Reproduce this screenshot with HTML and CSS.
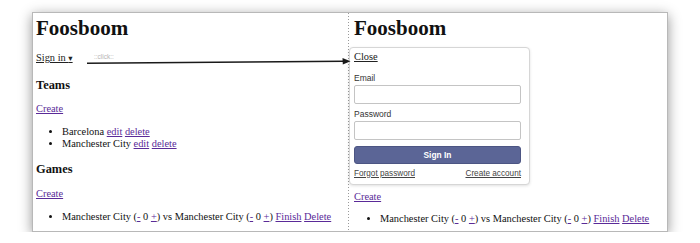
FILE: index.html
```html
<!DOCTYPE html>
<html>
  <head>
    <meta charset="UTF-8" />
    <title>Foosboom</title>
    <link rel="stylesheet" href="styles.css">
  </head>
  <body>
    <div class="shot">
      <div class="page page-left">
        <h1>Foosboom</h1>
        <p class="signin"><a href="#" class="plain">Sign in <span class="caret">&#9662;</span></a></p>
        <h3>Teams</h3>
        <p class="gap"><a href="#">Create</a></p>
        <ul class="gap">
          <li>Barcelona <a href="#">edit</a> <a href="#">delete</a></li>
          <li>Manchester City <a href="#">edit</a> <a href="#">delete</a></li>
        </ul>
        <h3 class="games">Games</h3>
        <p class="gap2"><a href="#">Create</a></p>
        <ul class="gap">
          <li>Manchester City (<a href="#">-</a> 0 <a href="#">+</a>) vs Manchester City (<a href="#">-</a> 0 <a href="#">+</a>) <a href="#">Finish</a> <a href="#">Delete</a></li>
        </ul>
      </div>

      <div class="divider"></div>

      <div class="page page-right">
        <h1>Foosboom</h1>
        <div class="dropdown">
          <a href="#" class="plain close">Close</a>
          <label class="lbl lbl-email">Email</label>
          <input class="field field-email" type="text" />
          <label class="lbl lbl-pass">Password</label>
          <input class="field field-pass" type="password" />
          <button class="btn-signin">Sign In</button>
          <div class="dd-links">
            <a href="#">Forgot password</a>
            <a href="#">Create account</a>
          </div>
        </div>
        <p class="after-dd"><a href="#">Create</a></p>
        <ul class="last">
          <li>Manchester City (<a href="#">-</a> 0 <a href="#">+</a>) vs Manchester City (<a href="#">-</a> 0 <a href="#">+</a>) <a href="#">Finish</a> <a href="#">Delete</a></li>
        </ul>
      </div>

      <!-- arrow drawn over the two screenshots -->
      <svg class="arrow" width="320" height="60" viewBox="0 0 320 60">
        <text x="61" y="45.5" class="click-note">::click::</text>
        <path d="M54 50.2 L311 48.3" stroke="#1a1a1a" stroke-width="1.6" fill="none" />
        <path d="M317.5 48.2 L309.5 45 L309.8 51.4 Z" fill="#1a1a1a" />
      </svg>
    </div>
  </body>
</html>
```

FILE: styles.css
```css
body {
  margin: 0;
  background: #fff;
  font-family: "Liberation Serif", "Times New Roman", serif;
  font-size: 10.4px;
  line-height: 12px;
  color: #111;
}

.shot {
  position: relative;
  display: flex;
  margin: 12px 0 0 32px;
  width: 636px;
  height: 220px;
  box-sizing: border-box;
  border: 1px solid #b8b8b8;
  background: #fff;
  box-shadow: 0 3px 12px rgba(0, 0, 0, 0.42);
  overflow: hidden;
}

.page {
  padding-top: 3.4px;
}

.page-left {
  width: 315px;
  padding-left: 3px;
  box-sizing: border-box;
}

.page-right {
  flex: 1;
  padding-left: 5px;
}

.divider {
  width: 1px;
  background-image: linear-gradient(#9a9a9a 40%, transparent 40%);
  background-size: 1px 3px;
}

h1 {
  margin: 0;
  font-size: 21px;
  line-height: 24px;
  font-weight: bold;
}

h3 {
  margin: 14px 0 0;
  font-size: 12.4px;
  line-height: 14px;
  font-weight: bold;
}

h3.games {
  margin-top: 12px;
}

p {
  margin: 0;
}

.signin {
  margin-top: 12px;
}

.gap {
  margin-top: 11px;
}

.gap2 {
  margin-top: 11.5px;
}

ul {
  margin: 0;
  padding-left: 26px;
}

a {
  color: #5a2a98;
}

a.plain {
  color: #222;
}

.caret {
  font-family: "DejaVu Sans", sans-serif;
  font-size: 8.5px;
  line-height: 6px;
}

/* sign in dropdown */
.dropdown {
  margin: 6.6px 0 0 -5px;
  width: 167px;
  padding: 3.4px 8px 5.5px 4px;
  border: 1px solid #d6d6d6;
  border-radius: 4px;
  background: #fff;
  box-shadow: 0 1px 3px rgba(0, 0, 0, 0.12);
}

.close {
  display: block;
  color: #333;
}

.lbl {
  display: block;
  font-family: "Liberation Sans", Arial, sans-serif;
  font-size: 8.5px;
  line-height: 10px;
  color: #333;
}

.lbl-email {
  margin-top: 10px;
}

.lbl-pass {
  margin-top: 5.5px;
}

.field {
  display: block;
  width: 167px;
  height: 19px;
  margin-top: 1.6px;
  padding: 0;
  box-sizing: border-box;
  border: 1px solid #c4c4c4;
  border-radius: 2px;
  background: #fff;
}

.btn-signin {
  display: block;
  width: 167px;
  height: 18px;
  margin-top: 6px;
  padding: 0;
  border: 1px solid #4c5583;
  border-radius: 3px;
  background: #5b6596;
  color: #fff;
  font-family: "Liberation Sans", Arial, sans-serif;
  font-size: 8.4px;
  font-weight: bold;
}

.dd-links {
  display: flex;
  justify-content: space-between;
  margin-top: 4.7px;
  font-family: "Liberation Sans", Arial, sans-serif;
  font-size: 8.2px;
  line-height: 10px;
}

.dd-links a {
  color: #444;
}

.after-dd {
  margin-top: 5.7px;
}

.last {
  margin-top: 10.5px;
}

/* annotation */
.arrow {
  position: absolute;
  left: 0;
  top: 0;
}

.click-note {
  font-family: "Liberation Sans", Arial, sans-serif;
  font-size: 6.5px;
  fill: #b5b5b5;
}
```
